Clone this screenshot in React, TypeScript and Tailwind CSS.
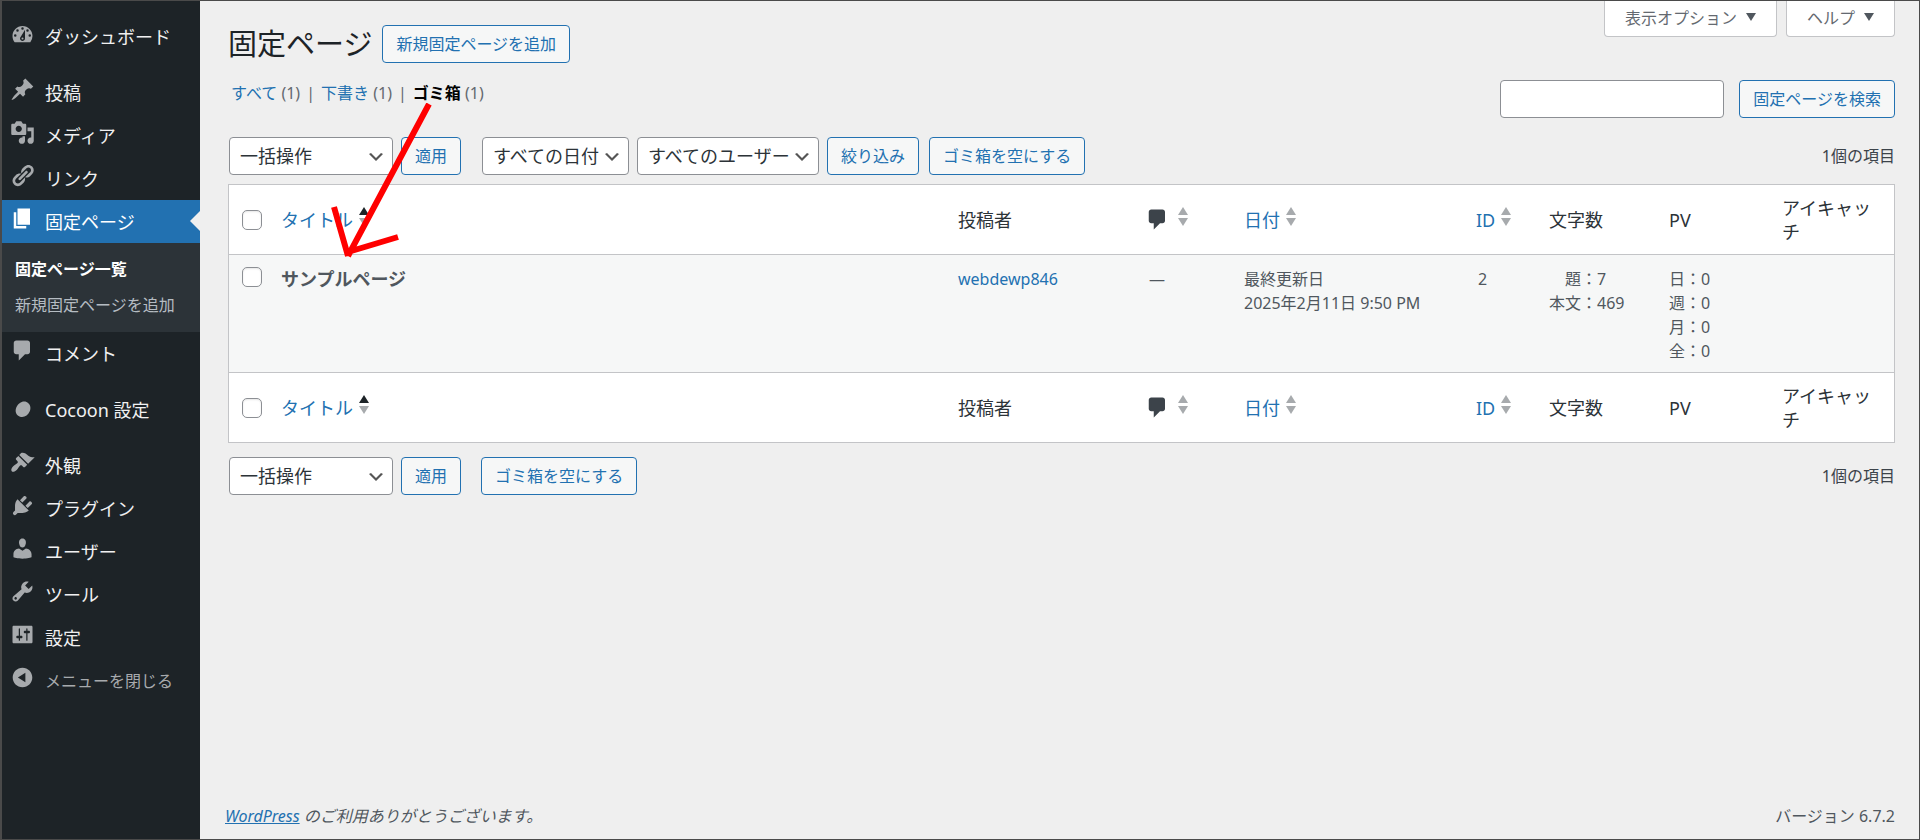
import { useState } from "react";
import type { ReactNode } from "react";

const ICONS = {
  dashboard:
    "M3.76 17h12.48A7.95 7.95 0 0 0 18 12c0-4.42-3.58-8-8-8s-8 3.58-8 8c0 1.9.66 3.64 1.76 5zM10 5a1 1 0 1 1 0 2 1 1 0 0 1 0-2zM6 6.5a1 1 0 1 1 0 2 1 1 0 0 1 0-2zm8 0a1 1 0 1 1 0 2 1 1 0 0 1 0-2zm-2 .5v7a2 2 0 1 1-3.4-1.4zM4.2 10.5a1 1 0 1 1 0 2 1 1 0 0 1 0-2zm11.6 0a1 1 0 1 1 0 2 1 1 0 0 1 0-2zM10 13.2a.8.8 0 1 0 0 1.6.8.8 0 0 0 0-1.6z",
  post: "M10.44 3.02l1.82-1.82 6.36 6.35-1.83 1.82c-1.05-.68-2.48-.57-3.41.36l-.75.75c-.92.93-1.04 2.35-.35 3.41l-1.83 1.82-2.41-2.41-2.8 2.79c-.42.42-3.38 2.71-3.8 2.29s1.86-3.39 2.28-3.81l2.79-2.79L4.1 9.36l1.83-1.82c1.05.69 2.48.57 3.4-.36l.75-.75c.93-.92 1.05-2.35.36-3.41z",
  media:
    "M13 11V4c0-.55-.45-1-1-1h-1.67L9 1H5L3.67 3H2c-.55 0-1 .45-1 1v7c0 .55.45 1 1 1h10c.55 0 1-.45 1-1zM7 4.5c1.38 0 2.5 1.12 2.5 2.5S8.38 9.5 7 9.5 4.5 8.38 4.5 7 5.62 4.5 7 4.5zM14 6h5v10.5c0 1.38-1.12 2.5-2.5 2.5S14 17.88 14 16.5s1.12-2.5 2.5-2.5c.17 0 .34.02.5.05V9h-3V6zm-4 8.05V13h2v3.5c0 1.38-1.12 2.5-2.5 2.5S7 17.88 7 16.5 8.12 14 9.5 14c.17 0 .34.02.5.05z",
  links:
    "M17.74 2.76c1.68 1.69 1.68 4.41 0 6.1l-1.53 1.52c-1.12 1.12-2.7 1.47-4.14 1.09l2.62-2.61.76-.77.76-.76c.84-.84.84-2.2 0-3.04-.84-.85-2.2-.85-3.04 0l-.77.76-3.38 3.38c-.37-1.44-.02-3.02 1.1-4.14l1.52-1.53c1.69-1.68 4.42-1.68 6.1 0zM8.59 13.43l5.34-5.34c.42-.42.42-1.1 0-1.52-.44-.43-1.13-.39-1.53 0l-5.33 5.34c-.42.42-.42 1.1 0 1.52.44.43 1.13.39 1.52 0zm-.76 2.29l4.14-4.15c.38 1.44.03 3.02-1.09 4.14l-1.52 1.53c-1.69 1.68-4.41 1.68-6.1 0-1.68-1.68-1.68-4.42 0-6.1l1.53-1.52c1.12-1.12 2.7-1.47 4.14-1.1l-4.14 4.15c-.85.84-.85 2.2 0 3.05.84.84 2.2.84 3.04 0z",
  page: "M6 15V2h10v13H6zm-1 1h8v2H3V5h2v11z",
  comments:
    "M5 2h9c1.1 0 2 .9 2 2v7c0 1.1-.9 2-2 2h-2l-5 5v-5H5c-1.1 0-2-.9-2-2V4c0-1.1.9-2 2-2z",
  cocoon:
    "M13.2 6.3c3 1.3 3.900 4.500 2.500 7.700s-4.600 5.200-7.700 4.100-4.300-4.200-2.900-7.500 5-5.600 8.100-4.300z",
  appearance:
    "M14.48 11.06L7.41 3.99l1.5-1.5c.5-.56 2.3-.47 3.51.32 1.21.8 1.43 1.28 2.91 2.1 1.18.64 2.45 1.26 4.45.85zm-.71.71L6.7 4.7 4.93 6.47c-.39.39-.39 1.02 0 1.41l1.06 1.06c.39.39.39 1.03 0 1.42-.6.6-1.43 1.11-2.21 1.69-.35.26-.7.53-1.01.84C1.43 14.23.4 16.08 1.4 17.07c.99 1 2.84-.03 4.18-1.36.31-.31.58-.66.85-1.02.57-.78 1.08-1.61 1.69-2.21.39-.39 1.02-.39 1.41 0l1.06 1.06c.39.39 1.02.39 1.41 0z",
  plugins:
    "M13.11 4.36L9.87 7.6 8 5.73l3.24-3.24c.35-.34 1.05-.2 1.56.32.52.51.66 1.21.31 1.55zm-8 1.77l.91-1.12 9.01 9.01-1.19.84c-.71.71-2.63 1.16-3.82 1.16H6.14L4.9 17.26c-.59.59-1.54.59-2.12 0-.59-.58-.59-1.53 0-2.12l1.24-1.24v-3.88c0-1.13.4-3.19 1.09-3.89zm7.26 3.97l3.24-3.24c.34-.35 1.04-.21 1.55.31.52.51.66 1.21.31 1.55l-3.24 3.25z",
  users:
    "M10 9.25c-2.27 0-2.73-3.44-2.73-3.44C7 4.02 7.82 2 9.97 2c2.16 0 2.98 2.02 2.71 3.81 0 0-.41 3.44-2.68 3.44zm0 2.57L12.72 10c2.39 0 4.52 2.33 4.52 4.53v2.49s-3.65 1.13-7.24 1.13c-3.65 0-7.24-1.13-7.24-1.13v-2.49c0-2.25 1.94-4.48 4.47-4.48z",
  tools:
    "M16.68 9.77c-1.34 1.34-3.3 1.67-4.95.99l-5.41 6.52c-.99.99-2.59.99-3.58 0s-.99-2.59 0-3.57l6.52-5.42c-.68-1.65-.35-3.61.99-4.95 1.28-1.28 3.12-1.62 4.72-1.06l-2.89 2.89 2.82 2.82 2.86-2.87c.53 1.58.18 3.39-1.08 4.65zM3.81 16.21c.4.39 1.04.39 1.43 0 .4-.4.4-1.04 0-1.43-.39-.4-1.03-.4-1.43 0-.39.39-.39 1.03 0 1.43z",
  settings:
    "M18 16V4c0-.55-.45-1-1-1H3c-.55 0-1 .45-1 1v12c0 .55.45 1 1 1h14c.55 0 1-.45 1-1zM8 11h1c.55 0 1 .45 1 1s-.45 1-1 1H8v1.500c0 .28-.22.5-.5.5s-.5-.22-.5-.5V13H6c-.55 0-1-.45-1-1s.45-1 1-1h1V5.500c0-.28.22-.5.5-.5s.5.22.5.5V11zm5-2h-1c-.55 0-1-.45-1-1s.45-1 1-1h1V5.500c0-.28.22-.5.5-.5s.5.22.5.5V7h1c.55 0 1 .45 1 1s-.45 1-1 1h-1v5.500c0 .28-.22.5-.5.5s-.5-.22-.5-.5V9z",
  collapse:
    "M10 2.160c4.330 0 7.840 3.510 7.840 7.840s-3.510 7.840-7.840 7.840S2.160 14.330 2.160 10 5.670 2.160 10 2.160zm2.300 11.700V6.140L6.300 10z",
};

type IconName = keyof typeof ICONS;

interface MenuItem {
  icon: IconName;
  label: string;
  gap?: boolean;
  children?: string[];
}

const MENU: MenuItem[] = [
  { icon: "dashboard", label: "ダッシュボード" },
  { icon: "post", label: "投稿", gap: true },
  { icon: "media", label: "メディア" },
  { icon: "links", label: "リンク" },
  {
    icon: "page",
    label: "固定ページ",
    children: ["固定ページ一覧", "新規固定ページを追加"],
  },
  { icon: "comments", label: "コメント" },
  { icon: "cocoon", label: "Cocoon 設定", gap: true },
  { icon: "appearance", label: "外観", gap: true },
  { icon: "plugins", label: "プラグイン" },
  { icon: "users", label: "ユーザー" },
  { icon: "tools", label: "ツール" },
  { icon: "settings", label: "設定" },
];

function Icon({ name }: { name: IconName }) {
  return (
    <svg
      viewBox="0 0 20 20"
      className="w-[25px] h-[25px] shrink-0"
      fill="currentColor"
      fillRule="evenodd"
      aria-hidden="true"
    >
      <path d={ICONS[name]} />
    </svg>
  );
}

function Sidebar() {
  return (
    <nav className="w-[198px] shrink-0 bg-[#1d2327] pt-3.5 text-lg leading-6 text-[#f0f0f1]">
      <ul>
        {MENU.map((item) => (
          <li key={item.label} className={item.gap ? "mt-[13px]" : ""}>
            <a
              href="#"
              className={`relative flex h-[43px] items-start gap-2.5 pl-2 ${
                item.children ? "bg-[#2271b1] text-white" : ""
              }`}
            >
              <span
                className={`pt-1.5 ${item.children ? "text-white" : "text-[#a7aaad]"}`}
              >
                <Icon name={item.icon} />
              </span>
              <span className="pt-2.5">{item.label}</span>
              {item.children && (
                <span className="absolute right-0 top-[11px] border-y-10 border-r-10 border-y-transparent border-r-[#efefef]" />
              )}
            </a>
            {item.children && (
              <ul className="bg-[#2c3338] pt-2 pb-[9px] text-base text-[#b5bcc2]">
                {item.children.map((child, i) => (
                  <li key={child}>
                    <a
                      href="#"
                      className={`flex h-9 items-center pl-[13px] ${
                        i === 0 ? "font-bold text-white" : ""
                      }`}
                    >
                      {child}
                    </a>
                  </li>
                ))}
              </ul>
            )}
          </li>
        ))}
      </ul>
      <button className="flex h-[43px] items-start gap-2.5 pl-2 text-base text-[#a7aaad]">
        <span className="pt-1.5">
          <Icon name="collapse" />
        </span>
        <span className="pt-2.5">メニューを閉じる</span>
      </button>
    </nav>
  );
}

function Button({ children }: { children: ReactNode }) {
  return (
    <button className="h-[38px] rounded border border-[#2271b1] bg-[#f6f7f7] px-[13px] text-base whitespace-nowrap text-[#2271b1]">
      {children}
    </button>
  );
}

function Select({
  label,
  option,
  width,
}: {
  label: string;
  option: string;
  width: string;
}) {
  return (
    <span className={`relative ${width}`}>
      <select
        aria-label={label}
        className="h-[38px] w-full appearance-none rounded border border-[#8c8f94] bg-white pl-2.5 text-lg leading-6 text-[#2c3338]"
      >
        <option>{option}</option>
      </select>
      <svg
        viewBox="0 0 20 20"
        className="pointer-events-none absolute right-[7px] top-2.5 size-5"
        fill="#555"
        aria-hidden="true"
      >
        <path d="M5 6l5 5 5-5 2 1-7 7-7-7 2-1z" />
      </svg>
    </span>
  );
}

function Sorter({ active }: { active?: boolean }) {
  return (
    <svg viewBox="0 0 10 19" className="mb-1.5 h-[19px] w-2.5" aria-hidden="true">
      <path d="M0 8L5 0l5 8z" fill={active ? "#1d2327" : "#a7aaad"} />
      <path d="M0 11h10l-5 8z" fill="#a7aaad" />
    </svg>
  );
}

function SortLink({
  children,
  active,
}: {
  children: ReactNode;
  active?: boolean;
}) {
  return (
    <a href="#" className="flex items-center gap-1.5 text-[#2271b1]">
      {children}
      <Sorter active={active} />
    </a>
  );
}

function HeadingRow({
  checked,
  onToggle,
  last,
}: {
  checked: boolean;
  onToggle: () => void;
  last?: boolean;
}) {
  const cell = `px-2.5 text-left align-middle font-normal ${
    last ? "" : "border-b border-[#c3c4c7]"
  }`;
  return (
    <tr className={`text-lg leading-6 text-[#2c3338] ${last ? "h-[69px]" : "h-[70px]"}`}>
      <td className={cell}>
        <Checkbox label="すべて選択" checked={checked} onToggle={onToggle} />
      </td>
      <th scope="col" className={cell}>
        <SortLink active>タイトル</SortLink>
      </th>
      <th scope="col" className={cell}>
        投稿者
      </th>
      <th scope="col" className={cell}>
        <a href="#" aria-label="コメント" className="flex items-center gap-2 text-[#3c434a]">
          <Icon name="comments" />
          <Sorter />
        </a>
      </th>
      <th scope="col" className={cell}>
        <SortLink>日付</SortLink>
      </th>
      <th scope="col" className={cell}>
        <SortLink>ID</SortLink>
      </th>
      <th scope="col" className={cell}>
        文字数
      </th>
      <th scope="col" className={cell}>
        PV
      </th>
      <th scope="col" className={cell}>
        アイキャッチ
      </th>
    </tr>
  );
}

function Checkbox({
  label,
  checked,
  onToggle,
}: {
  label: string;
  checked: boolean;
  onToggle: () => void;
}) {
  return (
    <input
      type="checkbox"
      aria-label={label}
      checked={checked}
      onChange={onToggle}
      className="ml-[3px] block size-5 appearance-none rounded-[5px] border border-[#8c8f94] bg-white shadow-[inset_0_1px_2px_rgba(0,0,0,0.1)] checked:bg-[#2271b1]"
    />
  );
}

function PagesTable() {
  const [checked, setChecked] = useState(false);
  const toggle = () => setChecked(!checked);
  const cell = "border-b border-[#c3c4c7] px-2.5 pt-3 pb-[9px] align-top";

  return (
    <table className="mt-[9px] w-full table-fixed border-separate border-spacing-0 border border-[#c3c4c7] bg-white">
      <colgroup>
        <col className="w-[42px]" />
        <col />
        <col className="w-[187px]" />
        <col className="w-[99px]" />
        <col className="w-[232px]" />
        <col className="w-[73px]" />
        <col className="w-[120px]" />
        <col className="w-[113px]" />
        <col className="w-[122px]" />
      </colgroup>
      <thead>
        <HeadingRow checked={checked} onToggle={toggle} />
      </thead>
      <tbody>
        <tr className="bg-[#f6f7f7] text-base leading-6 text-[#50575e]">
          <td className={cell}>
            <Checkbox
              label="サンプルページを選択"
              checked={checked}
              onToggle={toggle}
            />
          </td>
          <td className={`${cell} text-lg leading-6 font-bold`}>
            サンプルページ
          </td>
          <td className={cell}>
            <a href="#" className="text-[#2271b1]">
              webdewp846
            </a>
          </td>
          <td className={cell}>
            <span className="pl-1">—</span>
          </td>
          <td className={cell}>
            最終更新日
            <br />
            2025年2月11日 9:50 PM
          </td>
          <td className={cell}>
            <span className="pl-0.5">2</span>
          </td>
          <td className={cell}>
            <dl className="grid grid-cols-[auto_1fr]">
              <dt className="text-right">題：</dt>
              <dd>7</dd>
              <dt>本文：</dt>
              <dd>469</dd>
            </dl>
          </td>
          <td className={cell}>
            <ul>
              <li>日：0</li>
              <li>週：0</li>
              <li>月：0</li>
              <li>全：0</li>
            </ul>
          </td>
          <td className={cell} />
        </tr>
      </tbody>
      <tfoot>
        <HeadingRow checked={checked} onToggle={toggle} last />
      </tfoot>
    </table>
  );
}

function MetaTab({ children }: { children: ReactNode }) {
  return (
    <button className="flex h-9 items-start gap-[9px] rounded-b border border-t-0 border-[#c3c4c7] bg-white px-5 pt-[5px] text-base text-[#646970]">
      {children}
      <svg viewBox="0 0 10 8" className="mt-[7px] h-2 w-2.5" aria-hidden="true">
        <path d="M0 0h10L5 8z" fill="#50575e" />
      </svg>
    </button>
  );
}

function App() {
  const [query, setQuery] = useState("");

  return (
    <div className="relative flex min-h-screen border border-l-2 border-[#4a4a4a] bg-[#efefef] font-['Noto_Sans','Noto_Sans_CJK_JP',sans-serif] text-base text-[#3c434a]">
      <Sidebar />
      <main className="flex min-w-0 flex-1 flex-col pr-6 pl-7">
        <div className="flex items-start justify-between">
          <div className="pt-6">
            <div className="flex items-center gap-2.5">
              <h1 className="text-[29px] leading-9 text-[#1d2327]">
                固定ページ
              </h1>
              <Button>新規固定ページを追加</Button>
            </div>
            <ul className="mt-[18px] flex items-center gap-1.5 pl-[3px] text-[#646970]">
              <li>
                <a href="#" className="text-[#2271b1]">
                  すべて
                </a>{" "}
                (1)
              </li>
              <li>|</li>
              <li>
                <a href="#" className="text-[#2271b1]">
                  下書き
                </a>{" "}
                (1)
              </li>
              <li>|</li>
              <li>
                <a href="#" className="font-bold text-black">
                  ゴミ箱
                </a>{" "}
                (1)
              </li>
            </ul>
          </div>
          <div className="flex flex-col items-end gap-[43px]">
            <div className="flex gap-[9px]">
              <MetaTab>表示オプション</MetaTab>
              <MetaTab>ヘルプ</MetaTab>
            </div>
            <div className="flex gap-[15px]">
              <input
                type="search"
                aria-label="固定ページを検索"
                value={query}
                onChange={(e) => setQuery(e.target.value)}
                className="w-56 rounded border border-[#8c8f94] bg-white px-2.5"
              />
              <Button>固定ページを検索</Button>
            </div>
          </div>
        </div>

        <div className="mt-[19px] flex items-center pl-px">
          <div className="flex gap-2">
            <Select label="一括操作を選択" option="一括操作" width="w-[164px]" />
            <Button>適用</Button>
          </div>
          <div className="ml-[21px] flex gap-2">
            <Select label="日付で絞り込む" option="すべての日付" width="w-[147px]" />
            <Select
              label="ユーザーで絞り込む"
              option="すべてのユーザー"
              width="w-[182px]"
            />
            <Button>絞り込み</Button>
          </div>
          <div className="ml-2.5">
            <Button>ゴミ箱を空にする</Button>
          </div>
          <span className="ml-auto">1個の項目</span>
        </div>

        <PagesTable />

        <div className="mt-3.5 flex items-center pl-px">
          <div className="flex gap-2">
            <Select label="一括操作を選択" option="一括操作" width="w-[164px]" />
            <Button>適用</Button>
          </div>
          <div className="ml-5">
            <Button>ゴミ箱を空にする</Button>
          </div>
          <span className="ml-auto">1個の項目</span>
        </div>

        <footer className="mt-auto -ml-[3px] flex justify-between pb-[11px] text-[#50575e]">
          <p className="italic">
            <a href="#" className="text-[#2271b1] underline">
              WordPress
            </a>{" "}
            のご利用ありがとうございます。
          </p>
          <p>バージョン 6.7.2</p>
        </footer>
      </main>

      {/* Arrow pointing from the trash filter to the page row */}
      <svg
        viewBox="0 0 110 160"
        className="pointer-events-none absolute top-[102px] left-[326px] h-[160px] w-[110px]"
        fill="none"
        stroke="#ff0000"
        strokeWidth="6"
        aria-hidden="true"
      >
        <path d="M101 1L20 153M6 104l14 49M20 149l50-15" />
      </svg>
    </div>
  );
}

export default App;
